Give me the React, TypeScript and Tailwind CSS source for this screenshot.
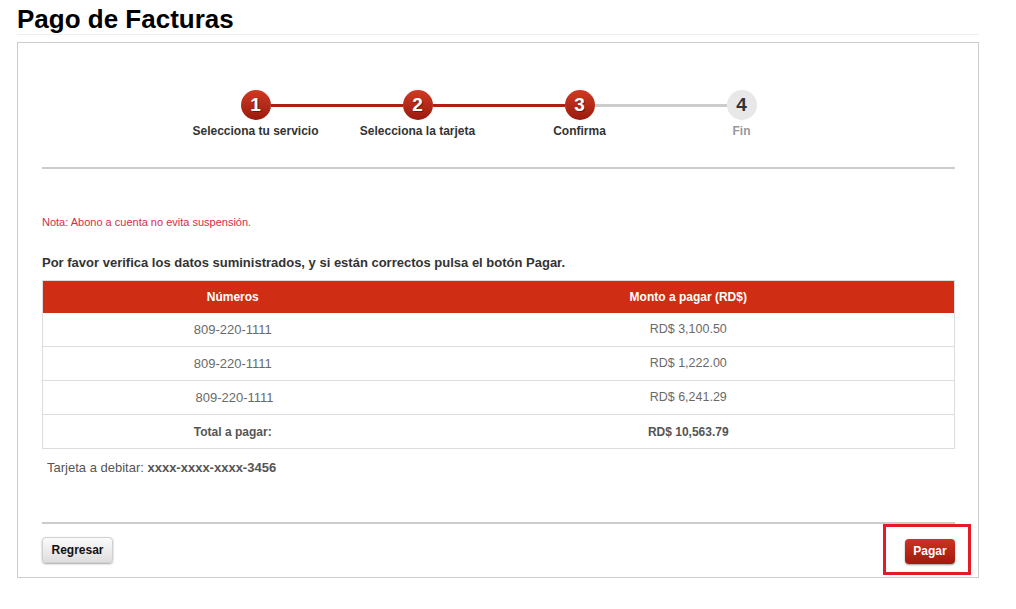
import React from 'react';

const steps = [
  { n: 1, label: 'Selecciona tu servicio', done: true },
  { n: 2, label: 'Selecciona la tarjeta', done: true },
  { n: 3, label: 'Confirma', done: true },
  { n: 4, label: 'Fin', done: false },
];

const rows = [
  { numero: '809-220-1111', monto: 'RD$ 3,100.50' },
  { numero: '809-220-1111', monto: 'RD$ 1,222.00' },
  { numero: '\u00a0809-220-1111', monto: 'RD$ 6,241.29' },
];

function StepCircle({ n, done }: { n: number; done: boolean }) {
  if (done) {
    return (
      <div className="w-[30px] h-[30px] rounded-full bg-gradient-to-b from-[#cf3a22] to-[#9a1a0e] flex items-center justify-center text-white text-[19px] font-bold [text-shadow:1px_1px_0_rgba(0,0,0,0.35)] shrink-0">
        {n}
      </div>
    );
  }
  return (
    <div className="w-[30px] h-[30px] rounded-full bg-[#e8e8e8] flex items-center justify-center text-[#333] text-[19px] font-bold shrink-0">
      {n}
    </div>
  );
}

export default function App() {
  return (
    <div className="w-[1016px] h-[609px] bg-white font-['Liberation_Sans',Arial,sans-serif]">
      <div className="pl-[17px] w-[979px]">
        <h1 className="text-[26px] font-bold leading-[30px] pt-[4px] text-black border-b border-[#eeeeee]">
          Pago de Facturas
        </h1>

        <div className="mt-[7px] h-[536px] border border-[#cccccc] pl-[24px] pr-[23px] pt-[47px]">
          {/* progress */}
          <div className="flex justify-center items-center">
            {steps.map((s, i) => (
              <React.Fragment key={s.n}>
                {i > 0 && (
                  <div className={`w-[132px] h-[3px] ${s.done ? 'bg-[#b1200f]' : 'bg-[#cccccc]'}`} />
                )}
                <StepCircle n={s.n} done={s.done} />
              </React.Fragment>
            ))}
          </div>
          <div className="flex justify-center mt-[4px]">
            {steps.map((s) => (
              <div
                key={s.n}
                className={`w-[162px] text-center text-[12px] leading-[14px] font-bold ${s.done ? 'text-[#333]' : 'text-[#999]'}`}
              >
                {s.label}
              </div>
            ))}
          </div>

          <div className="mt-[29px] h-[2px] bg-[#cccccc]" />

          <p className="mt-[47px] text-[11px] leading-[13px] text-[#d62d4a]">
            Nota: Abono a cuenta no evita suspensión.
          </p>

          <p className="mt-[26px] text-[13px] leading-[16px] font-bold text-[#333]">
            Por favor verifica los datos suministrados, y si están correctos pulsa el botón Pagar.
          </p>

          <table className="mt-[9px] w-full border-collapse border border-[#dddddd]">
            <thead>
              <tr className="bg-[#cf2e14] text-white h-[32px] text-[12px]">
                <th className="w-[380px] font-bold">Números</th>
                <th className="font-bold">Monto a pagar (RD$)</th>
              </tr>
            </thead>
            <tbody className="text-[#6a6a6a]">
              {rows.map((r, i) => (
                <tr key={i} className="h-[34px] border-b border-[#dddddd]">
                  <td className="text-center text-[13px]">{r.numero}</td>
                  <td className="text-center text-[12.5px]">{r.monto}</td>
                </tr>
              ))}
              <tr className="h-[34px] font-bold text-[#555] text-[12px]">
                <td className="text-center">Total a pagar:</td>
                <td className="text-center">RD$ 10,563.79</td>
              </tr>
            </tbody>
          </table>

          <p className="mt-[11px] pl-[5px] text-[13px] leading-[15px] text-[#555]">
            Tarjeta a debitar: <span className="font-bold">xxxx-xxxx-xxxx-3456</span>
          </p>

          <div className="mt-[47px] h-[2px] bg-[#cccccc]" />

          <div className="mt-[13px] flex justify-between items-start">
            <button className="h-[26px] w-[71px] rounded-[4px] border border-[#d0d0d0] bg-gradient-to-b from-[#fbfbfb] to-[#dedede] shadow-[0_1px_2px_rgba(0,0,0,0.35)] text-[12px] font-bold text-[#111]">
              Regresar
            </button>
            <div className="relative mt-[1px]">
              <button className="h-[25px] w-[50px] rounded-[4px] bg-gradient-to-b from-[#cc3322] to-[#a3180e] shadow-[0_1px_2px_rgba(0,0,0,0.4)] text-[12px] font-bold text-white">
                Pagar
              </button>
              <span className="absolute -top-[14px] -left-[22px] w-[88px] h-[51px] border-[3px] border-[#e41b24] pointer-events-none" />
            </div>
          </div>
        </div>
      </div>
    </div>
  );
}
